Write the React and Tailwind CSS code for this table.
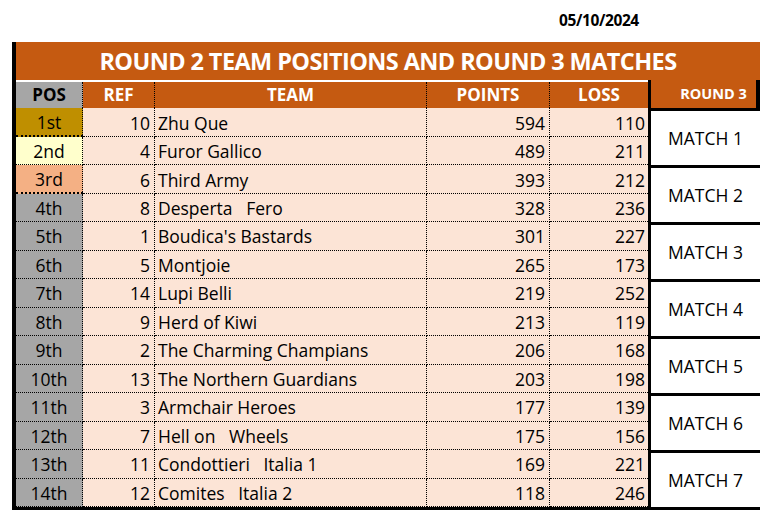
import React from "react";

const rows = [
  { pos: "1st", ref: 10, team: "Zhu Que", points: 594, loss: 110 },
  { pos: "2nd", ref: 4, team: "Furor Gallico", points: 489, loss: 211 },
  { pos: "3rd", ref: 6, team: "Third Army", points: 393, loss: 212 },
  { pos: "4th", ref: 8, team: "Desperta   Fero", points: 328, loss: 236 },
  { pos: "5th", ref: 1, team: "Boudica's Bastards", points: 301, loss: 227 },
  { pos: "6th", ref: 5, team: "Montjoie", points: 265, loss: 173 },
  { pos: "7th", ref: 14, team: "Lupi Belli", points: 219, loss: 252 },
  { pos: "8th", ref: 9, team: "Herd of Kiwi", points: 213, loss: 119 },
  { pos: "9th", ref: 2, team: "The Charming Champians", points: 206, loss: 168 },
  { pos: "10th", ref: 13, team: "The Northern Guardians", points: 203, loss: 198 },
  { pos: "11th", ref: 3, team: "Armchair Heroes", points: 177, loss: 139 },
  { pos: "12th", ref: 7, team: "Hell on   Wheels", points: 175, loss: 156 },
  { pos: "13th", ref: 11, team: "Condottieri   Italia 1", points: 169, loss: 221 },
  { pos: "14th", ref: 12, team: "Comites   Italia 2", points: 118, loss: 246 },
];

const posStyle = [
  "bg-[#bf8f00] border-b-2 border-dashed border-black",
  "bg-[#ffffcc] border-b border-dotted border-black",
  "bg-[#f4b084] border-b-2 border-dashed border-black",
];

export default function App() {
  return (
    <div className="w-[768px] h-[517px] bg-white text-black font-['Open_Sans',sans-serif] overflow-hidden">
      <div className="h-[42px] flex items-center">
        <span className="ml-[559px] text-[15.5px] font-bold tracking-tight">05/10/2024</span>
      </div>

      <div className="ml-[12px] w-[748px]">
        <div className="h-[38px] bg-[#c55a11] border-l-4 border-black flex items-center justify-center pt-[2px]">
          <span className="text-white font-bold text-[23.5px] tracking-tight">
            ROUND 2 TEAM POSITIONS AND ROUND 3 MATCHES
          </span>
        </div>

        <div className="flex">
          <div className="w-[636px] border-l-4 border-b-[3px] border-black">
            <div className="grid grid-cols-[67px_72px_272px_123px_98px] h-[28px] font-bold text-[17px] border-b border-dotted border-black pt-[2px]">
              <div className="bg-[#a6a6a6] flex items-center justify-center border-r border-dotted border-black">POS</div>
              <div className="bg-[#c55a11] text-white flex items-center justify-center border-r border-dotted border-black">REF</div>
              <div className="bg-[#c55a11] text-white flex items-center justify-center border-r border-dotted border-black">TEAM</div>
              <div className="bg-[#c55a11] text-white flex items-center justify-center border-r border-dotted border-black">POINTS</div>
              <div className="bg-[#c55a11] text-white flex items-center justify-center">LOSS</div>
            </div>
            {rows.map((r, i) => (
              <div key={r.pos} className="grid grid-cols-[67px_72px_272px_123px_98px] h-[28.5px] text-[17.5px] bg-[#fce4d6]">
                <div
                  className={
                    "flex items-center justify-center pt-[1px] border-r border-dotted border-black " +
                    (posStyle[i] || "bg-[#a6a6a6] border-b border-dotted border-black")
                  }
                >
                  {r.pos}
                </div>
                <div className="flex items-center justify-end pt-[1px] pr-[4px] border-r border-b border-dotted border-black">{r.ref}</div>
                <div className="flex items-center pt-[1px] pl-[3px] border-r border-b border-dotted border-black whitespace-pre">{r.team}</div>
                <div className="flex items-center justify-end pt-[1px] pr-[4px] border-r border-b border-dotted border-black">{r.points}</div>
                <div className="flex items-center justify-end pt-[1px] pr-[3px] border-b border-dotted border-black">{r.loss}</div>
              </div>
            ))}
          </div>

          <div className="w-[112px] border-l-[3px] border-black">
            <div className="h-[31px] bg-[#c55a11] border-r-4 border-b-[3px] border-black flex items-center justify-center pl-5 text-white font-bold text-[14.5px]">
              ROUND 3
            </div>
            {[1, 2, 3, 4, 5, 6, 7].map((m) => (
              <div key={m} className="h-[57px] border-b-[3px] border-black flex items-center justify-center text-[17.5px]">
                MATCH {m}
              </div>
            ))}
          </div>
        </div>
      </div>
    </div>
  );
}
